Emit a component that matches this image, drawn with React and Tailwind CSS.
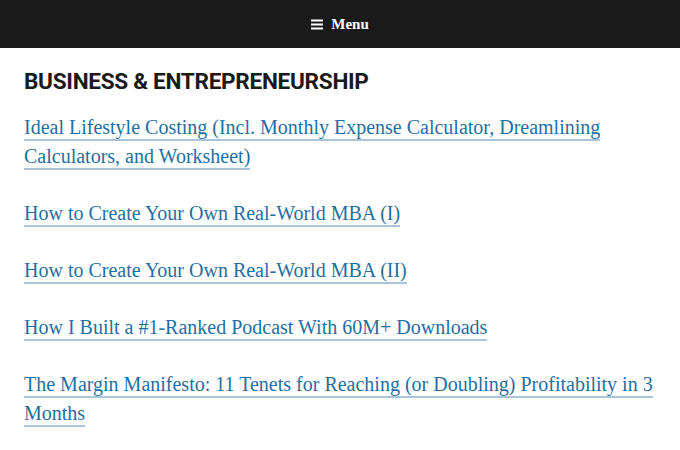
export default function App() {
  const items = [
    "Ideal Lifestyle Costing (Incl. Monthly Expense Calculator, Dreamlining Calculators, and Worksheet)",
    "How to Create Your Own Real-World MBA (I)",
    "How to Create Your Own Real-World MBA (II)",
    "How I Built a #1-Ranked Podcast With 60M+ Downloads",
    "The Margin Manifesto: 11 Tenets for Reaching (or Doubling) Profitability in 3 Months",
  ];
  return (
    <div className="w-[680px] h-[450px] overflow-hidden bg-white">
      <div className="h-[48px] bg-[#1a1a1a] flex items-center justify-center gap-[8px] text-white">
        <svg width="12" height="11" viewBox="0 0 12 11" className="mt-[1px]">
          <rect x="0" y="0.5" width="12" height="2" fill="white" />
          <rect x="0" y="4.5" width="12" height="2" fill="white" />
          <rect x="0" y="8.5" width="12" height="2" fill="white" />
        </svg>
        <span className="font-['Liberation_Serif',serif] font-bold text-[15px]">Menu</span>
      </div>
      <div className="pl-[24px] pr-[4px] pt-[20px]">
        <h2 className="font-['Roboto',sans-serif] font-bold text-[22.6px] leading-[28px] text-[#1a1a1a] tracking-[-0.3px]">
          BUSINESS &amp; ENTREPRENEURSHIP
        </h2>
        <div className="mt-[17px] font-['Liberation_Serif',serif] text-[20px] leading-[29px] text-[#1f6fa3]">
          {items.map((t, i) => (
            <p key={i} className="mb-[28px]">
              <a href="#" className="border-b-2 border-[#abc4d7] pb-[1px]">{t}</a>
            </p>
          ))}
        </div>
      </div>
    </div>
  );
}
